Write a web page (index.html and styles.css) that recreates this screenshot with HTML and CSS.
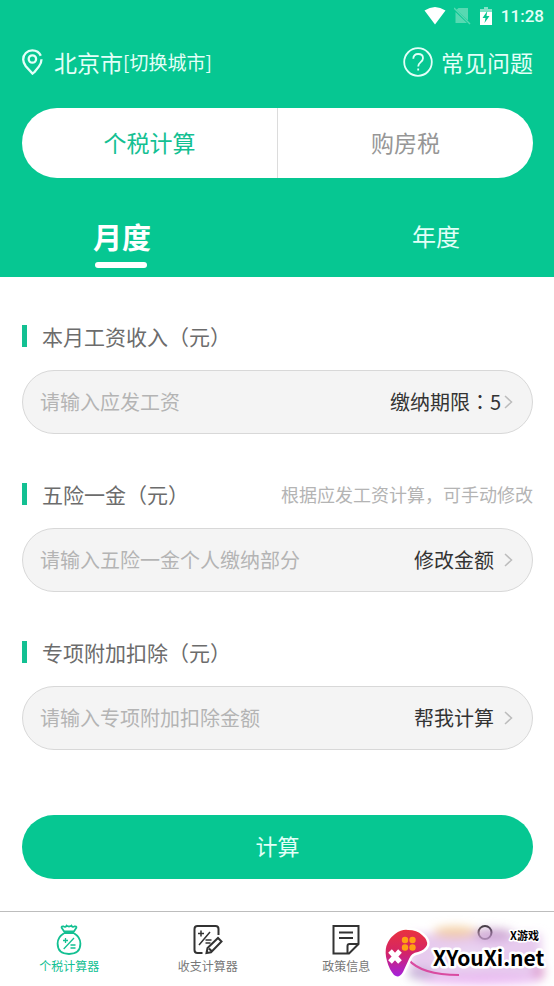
FILE: index.html
```html
<!DOCTYPE html>
<html lang="zh-CN">
<head>
<meta charset="utf-8">
<meta name="viewport" content="width=device-width, initial-scale=1">
<title>个税计算器</title>
<link rel="stylesheet" href="styles.css">
</head>
<body>
<header class="header">
  <div class="status">
    <svg class="status-wifi" width="22" height="18" viewBox="0 0 22 18"><path d="M0.5 3.5Q11-3.5 21.5 3.5L11 17.5Z" fill="#fff"/></svg>
    <svg width="17" height="18" viewBox="0 0 17 18"><path d="M4.5 1H14V13.5L2.5 2.7ZM1.5 5L13 16H1.5Z" fill="#57d9b2"/><path d="M0 1L16 17" stroke="#57d9b2" stroke-width="1.4"/></svg>
    <svg class="status-battery" width="12" height="18" viewBox="0 0 12 18"><path d="M4 0h4v2h4v5H0V2h4Z" fill="#83e3c8"/><path d="M0 5h12v13H0Z" fill="#fff"/><path d="M7.3 4L2.5 11H5.5L4.5 16L9.5 9H6.5Z" fill="#06c792"/></svg>
    <time class="clock">11:28</time>
  </div>
  <div class="topline">
    <button class="city" type="button">
      <svg width="21" height="26" viewBox="0 0 21 26" fill="none" stroke="#e3fff8" stroke-width="2.3"><path d="M13.5 22.2L10.5 24.6L3.8 17.2C1.8 14.5 1.2 12.7 1.2 10.4C1.2 5.2 5.2 1.4 10.3 1.4C14.3 1.4 17.5 3.6 18.8 6.8M19.5 10.2C19.5 13.2 18.7 15.2 16.8 17.6L12.7 22.8"/><circle cx="10.4" cy="10" r="3.7"/></svg>
      <span class="city-name">北京市<small class="city-switch">[切换城市]</small></span>
    </button>
    <a class="faq" href="#faq">
      <svg width="30" height="30" viewBox="0 0 30 30" fill="none" stroke="#e3fff8" stroke-width="1.8"><circle cx="15" cy="15" r="13.8"/><path d="M10.3 11.7C10.3 8.6 12.2 7 15.1 7C18 7 20 8.7 20 11.2C20 15 15.2 15.2 15.2 19.4M15.2 21.4V23.6"/></svg>
      常见问题
    </a>
  </div>
  <nav class="segment">
    <button class="segment-item active" type="button">个税计算</button>
    <button class="segment-item" type="button">购房税</button>
  </nav>
  <nav class="period">
    <button class="period-item active" type="button">月度</button>
    <button class="period-item" type="button">年度</button>
  </nav>
</header>

<main class="main">
  <form class="form">
    <section class="group">
      <div class="group-head"><label class="title" for="salary">本月工资收入（元）</label></div>
      <div class="field">
        <input class="input" id="salary" type="text" placeholder="请输入应发工资">
        <button class="action tight" type="button"><span>缴纳期限<span class="colon" lang="zh-TW">：</span>5</span>
          <svg width="9" height="16" viewBox="0 0 9 16" fill="none" stroke="#bcbcbc" stroke-width="1.5"><path d="M1 2L7.5 8L1 14"/></svg></button>
      </div>
    </section>
    <section class="group">
      <div class="group-head"><label class="title" for="insurance">五险一金（元）</label><span class="hint">根据应发工资计算，可手动修改</span></div>
      <div class="field">
        <input class="input" id="insurance" type="text" placeholder="请输入五险一金个人缴纳部分">
        <button class="action" type="button">修改金额
          <svg width="9" height="16" viewBox="0 0 9 16" fill="none" stroke="#bcbcbc" stroke-width="1.5"><path d="M1 2L7.5 8L1 14"/></svg></button>
      </div>
    </section>
    <section class="group">
      <div class="group-head"><label class="title" for="deduction">专项附加扣除（元）</label></div>
      <div class="field">
        <input class="input" id="deduction" type="text" placeholder="请输入专项附加扣除金额">
        <button class="action" type="button">帮我计算
          <svg width="9" height="16" viewBox="0 0 9 16" fill="none" stroke="#bcbcbc" stroke-width="1.5"><path d="M1 2L7.5 8L1 14"/></svg></button>
      </div>
    </section>
    <button class="submit" type="submit">计算</button>
  </form>
</main>

<nav class="tabbar">
  <a class="tab active" href="#tax">
    <svg width="30" height="32" viewBox="0 0 30 32" fill="none" stroke="currentColor" stroke-width="1.8"><path d="M10 7.3L7.6 3.8Q7.4 2 9.6 2.4Q11.4 3.8 12.6 1.6Q15 3.4 17.4 1.6Q18.6 3.8 20.4 2.4Q22.6 2 22.4 3.8L20 7.3ZM10 9.2H20M10 9.2C5.6 11.8 3.6 15.5 3.6 19.6C3.6 26.6 8 30 15 30S26.4 26.6 26.4 19.6C26.4 15.5 24.4 11.8 20 9.2"/><path d="M9.7 25L20 14M9 16.5h5M11.5 14v5M16.5 21h5M16.5 24h5" stroke-width="1.3"/></svg>
    <span>个税计算器</span>
  </a>
  <a class="tab" href="#budget">
    <svg class="dark" width="30" height="32" viewBox="0 0 30 32" fill="none" stroke="currentColor" stroke-width="2"><path d="M9.5 29H4.5Q1.5 29 1.5 26V5Q1.5 2 4.5 2H22.5Q25.5 2 25.5 5V11"/><path d="M6 21L17 8M5 9.5h6M8 6.5v6M12.5 16h6M12.5 19h5" stroke-width="1.5"/><path d="M13.5 29L14.5 24L25 14L28.5 17.5L18 28.2ZM16 24.5L18.5 27"/></svg>
    <span>收支计算器</span>
  </a>
  <a class="tab" href="#policy">
    <svg class="dark" width="30" height="32" viewBox="0 0 30 32" fill="none" stroke="currentColor" stroke-width="2"><path d="M2.5 2H27.5V20L18 29.5H2.5ZM27.5 20H18.5Q16.5 20 16.5 22V29.5M8 8.5H22M8 14H22"/></svg>
    <span>政策信息</span>
  </a>
  <a class="tab" href="#me" aria-label="我的">
    <svg class="dark" width="30" height="32" viewBox="0 0 30 32" fill="none" stroke="currentColor" stroke-width="2"><circle cx="15" cy="8.5" r="6.5"/></svg>
  </a>
  <svg class="watermark" width="179" height="74" viewBox="0 0 179 74">
    <defs>
      <filter id="haze" x="-30%" y="-50%" width="160%" height="200%"><feGaussianBlur stdDeviation="5"/></filter>
      <linearGradient id="pad" x1="0" y1="0" x2="0" y2="1"><stop offset="0" stop-color="#e9323f"/><stop offset=".5" stop-color="#d32468"/><stop offset="1" stop-color="#a421dc"/></linearGradient>
    </defs>
    <g filter="url(#haze)">
      <path d="M35 22H166V66H35Z" fill="#dfb9e8" opacity=".75"/>
      <ellipse cx="80" cy="20" rx="22" ry="6" fill="#efbd7b" opacity=".65"/>
      <ellipse cx="46" cy="62" rx="14" ry="6" fill="#a9a0c4" opacity=".5"/>
      <ellipse cx="105" cy="68" rx="60" ry="5" fill="#e5a4f0" opacity=".7"/>
      <ellipse cx="118" cy="22" rx="20" ry="6" fill="#a96bb0" opacity=".5"/>
      <ellipse cx="90" cy="46" rx="30" ry="9" fill="#ead9f3"/>
      <ellipse cx="164" cy="60" rx="6" ry="8" fill="#d98fc4" opacity=".7"/>
    </g>
    <path d="M33 47Q46 63 84 63" fill="none" stroke="#d94ba1" stroke-width="2"/>
    <path d="M20 22Q27 17 33 18Q42 18 47 23Q53 28 52 33Q50 38 43 40Q36 41 34 47L28 60Q24 67 19 63Q14 57 12 49Q7 32 20 22Z" fill="url(#pad)" stroke="#fff" stroke-width="5" paint-order="stroke" stroke-linejoin="round"/>
    <g fill="#ffa113"><circle cx="30" cy="28" r="3.2"/><circle cx="37.5" cy="28" r="3.2"/><circle cx="30" cy="35.5" r="3.2"/><circle cx="37.5" cy="35.5" r="3.2"/></g>
    <path d="M15 39L25 50M25 39L15 50" stroke="#fff" stroke-width="5"/>
    <text class="brand-small" x="135" y="28">X游戏</text>
    <text class="brand" x="58" y="54">XYouXi.net</text>
  </svg>
</nav>
</body>
</html>
```
FILE: styles.css
```css
* { box-sizing: border-box; }
body {
  margin: 0;
  min-height: 100vh;
  display: flex;
  flex-direction: column;
  background: #fff;
  color: #6c6c6c;
  font-family: "Noto Sans CJK SC", sans-serif;
}
button, input { font: inherit; color: inherit; border: 0; background: none; padding: 0; }
a { color: inherit; text-decoration: none; }
svg { flex: none; }

/* The Traditional Chinese colon sits in the middle of its cell */
.colon { font-family: "Noto Sans CJK TC", sans-serif; }

.header { background: #06c792; color: #e3fff8; padding: 0 21px 0 22px; }
.status { height: 32px; display: flex; align-items: center; justify-content: flex-end; margin-right: -11px; }
.status-wifi { margin-right: 8px; }
.status-battery { margin: 0 9px; }
.clock { font: 500 17px/20px Roboto, sans-serif; }
.topline { height: 60px; display: flex; align-items: center; justify-content: space-between; }
.city { display: flex; align-items: center; gap: 11px; }
.city-name { font-size: 23px; line-height: 30px; display: flex; align-items: center; }
.city-switch { font-size: 19px; }
.faq { display: flex; align-items: center; gap: 8px; font-size: 23px; line-height: 30px; }
.segment { margin-top: 16px; height: 70px; display: flex; background: #fff; border-radius: 35px; }
.segment-item { flex: 1; font-size: 23px; color: #969696; padding-bottom: 2px; }
.segment-item.active { color: #13c092; }
.segment-item + .segment-item { border-left: 1px solid #dcdcdc; }
.period { height: 99px; padding: 0 73px 0 71px; display: flex; justify-content: space-between; }
.period-item { font-size: 24px; padding-top: 16px; }
.period-item.active { position: relative; font-size: 29px; font-weight: 700; color: #fff; }
.period-item.active::after {
  content: "";
  position: absolute;
  left: 2px;
  right: 4px;
  bottom: 9px;
  height: 6px;
  border-radius: 3px;
  background: #fff;
}

.main { flex: 1; padding: 43px 21px 32px 22px; }
.group { margin-bottom: 44px; }
.group-head { height: 32px; margin-bottom: 18px; display: flex; align-items: center; justify-content: space-between; }
.title { display: flex; align-items: center; font-size: 21px; line-height: 32px; }
.title::before { content: ""; width: 5px; height: 22px; margin-right: 15px; background: #13c092; }
.hint { font-size: 18px; color: #b4b4b4; }
.field {
  height: 64px;
  display: flex;
  align-items: center;
  padding: 0 19px 0 17px;
  background: #f4f4f4;
  border: 1px solid #d8d8d8;
  border-radius: 32px;
}
.input { flex: 1; min-width: 0; font-size: 20px; line-height: 30px; outline: 0; }
.input::placeholder { color: #b4b4b4; opacity: 1; }
.action { display: flex; align-items: center; gap: 10px; font-size: 20px; line-height: 30px; color: #333; }
.action.tight { gap: 3px; }
.submit {
  display: block;
  width: 100%;
  height: 64px;
  margin-top: 65px;
  padding-bottom: 4px;
  border-radius: 32px;
  background: #06c792;
  color: #e3fff8;
  font-size: 22px;
}

.tabbar { position: relative; height: 75px; display: flex; border-top: 1px solid #bdbdbd; background: #fff; }
.tab { flex: 1; display: flex; flex-direction: column; align-items: center; padding-top: 12px; font-size: 12px; line-height: 20px; color: #777; }
.tab.active { color: #13c092; }
.dark { color: #333; }
.watermark { position: absolute; right: 0; bottom: 0; }
.brand, .brand-small {
  font-family: "Noto Sans CJK SC", sans-serif;
  font-weight: 700;
  fill: #000;
  stroke: #fff;
  stroke-width: 5px;
  stroke-linejoin: round;
  paint-order: stroke;
}
.brand { font-size: 21px; }
.brand-small { font-size: 11px; stroke-width: 3px; }
```
